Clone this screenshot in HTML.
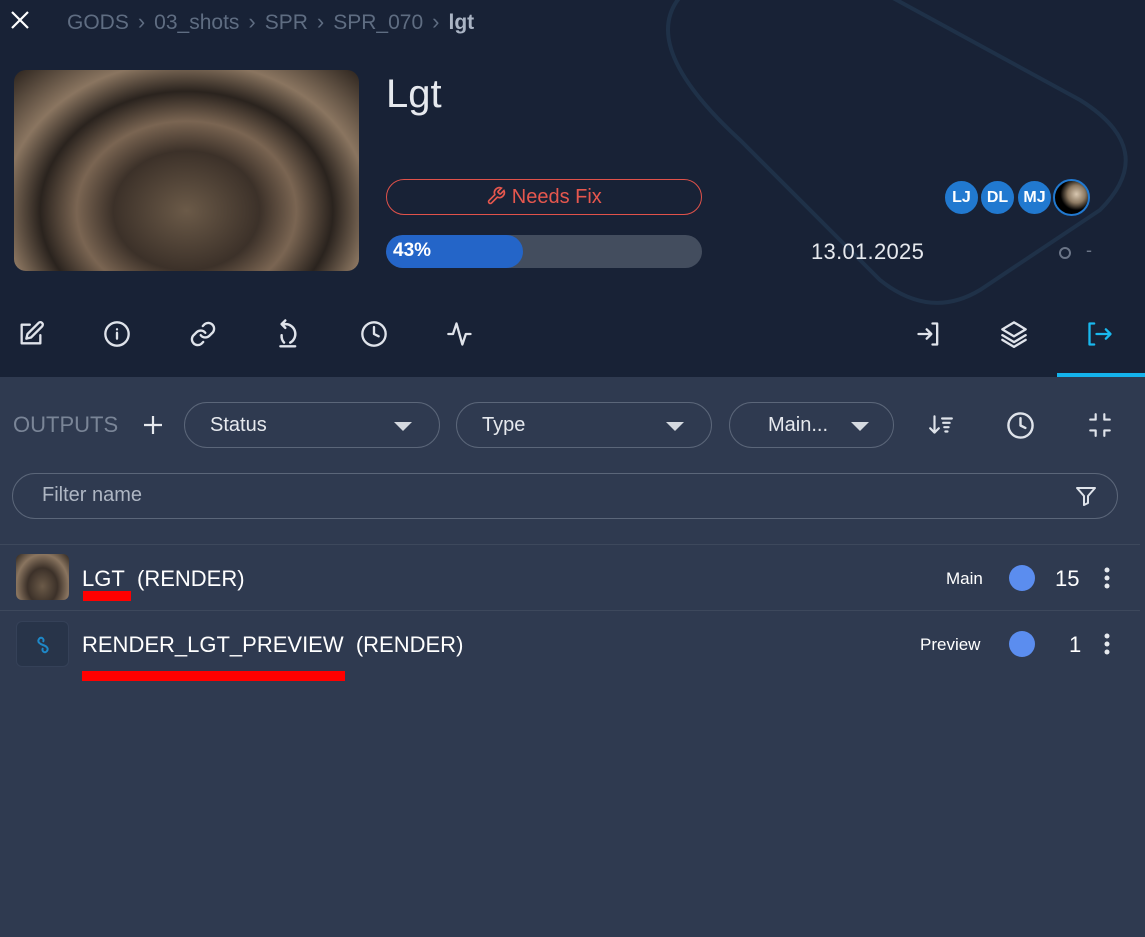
<!DOCTYPE html>
<html><head><meta charset="utf-8"><style>
*{box-sizing:border-box;margin:0;padding:0}
body{width:1145px;height:937px;background:#2f3a50;font-family:"Liberation Sans",sans-serif;color:#e6e9ee;position:relative;overflow:hidden}
.hdr{position:absolute;left:0;top:0;width:1145px;height:377px;background:#182236;overflow:hidden}
.abs{position:absolute}
.crumb{left:67px;top:9px;font-size:21px;color:#5f6d82;white-space:nowrap}
.crumb b{color:#aab4c4}
.crumb i{font-style:normal;display:inline-block;margin:0 9px;font-size:22px}
.thumb{left:14px;top:70px;width:345px;height:201px;border-radius:12px;background:radial-gradient(ellipse at 50% 70%,#6b5a48 0%,#3c3129 30%,#7a6552 45%,#2a231e 60%,#8a7560 75%,#2c241e 100%)}
.pill{border-radius:18px}
svg{display:block}
.sel{position:absolute;top:402px;height:46px;border:1px solid #5b6679;border-radius:23px;font-size:20px;padding:11px 0 0 25px;color:#e6e9ee}
.tri{position:absolute;top:19px;width:0;height:0;border-left:9px solid transparent;border-right:9px solid transparent;border-top:9px solid #d5d9e0}
.row{position:absolute;left:0;width:1140px;border-top:1px solid #3d485c}
.ico{stroke:#dfe3ea;fill:none;stroke-width:2;stroke-linecap:round;stroke-linejoin:round}
.dot{position:absolute;width:26px;height:26px;border-radius:50%;background:#5b8def}
.av{position:absolute;top:179px;width:37px;height:37px;border-radius:50%;background:#2179d0;border:2px solid #182236;color:#fff;font-weight:bold;font-size:16px;text-align:center;line-height:33px}
</style></head><body>
<div class="hdr">
  <svg class="abs" style="left:560px;top:-40px" width="585" height="380"><path d="M140 20 Q200 -30 300 20 L520 140 Q600 190 540 250 L420 330 Q370 360 320 320 L180 180 Q60 70 140 20Z" stroke="#1f3148" stroke-width="4" fill="none"/></svg>
  <svg class="abs" style="left:10px;top:10px" width="20" height="20"><path d="M2 2L18 18M18 2L2 18" stroke="#fff" stroke-width="2.2"/></svg>
  <div class="abs crumb">GODS<i>›</i>03_shots<i>›</i>SPR<i>›</i>SPR_070<i>›</i><b>lgt</b></div>
  <div class="abs thumb"></div>
  <div class="abs" style="left:386px;top:72px;font-size:40px;color:#e6e9ee">Lgt</div>
  <div class="abs pill" style="left:386px;top:179px;width:316px;height:36px;border:1.5px solid #e0524a;color:#e6574e;font-size:20px;text-align:center;line-height:35px"><svg style="display:inline-block;vertical-align:-3px" width="20" height="20" viewBox="0 0 24 24"><path d="M14.7 6.3a1 1 0 0 0 0 1.4l1.6 1.6a1 1 0 0 0 1.4 0l3.8-3.8a6 6 0 0 1-7.9 7.9l-6.9 6.9a2.1 2.1 0 0 1-3-3l6.9-6.9a6 6 0 0 1 7.9-7.9z" stroke="#e6574e" stroke-width="2" fill="none"/></svg> Needs Fix</div>
  <div class="abs pill" style="left:386px;top:235px;width:316px;height:33px;background:#434d5e;border-radius:17px;overflow:hidden"><div style="width:137px;height:33px;background:#2465c8;border-radius:17px;color:#fff;font-weight:bold;font-size:19px;padding:5px 0 0 7px">43%</div></div>
  <div class="abs" style="left:811px;top:239px;font-size:22px;letter-spacing:0.3px;color:#e6e9ee">13.01.2025</div>
  <div class="abs" style="left:1059px;top:247px;width:12px;height:12px;border:2px solid #6b7587;border-radius:50%"></div>
  <div class="abs" style="left:1086px;top:240px;color:#6b7587;font-size:18px">-</div>
  <div class="av" style="left:943px">LJ</div>
  <div class="av" style="left:979px">DL</div>
  <div class="av" style="left:1016px">MJ</div>
  <div class="av" style="left:1053px;background:radial-gradient(circle at 65% 40%,#d8c7b0 0,#8d7a63 30%,#000 55%);border-color:#2179d0"></div>
  <svg class="abs" style="left:17px;top:320px" width="28" height="28" viewBox="0 0 24 24"><path class="ico" d="M11 4H4v16h16v-7M18.5 2.5a2.1 2.1 0 0 1 3 3L12 15l-4 1 1-4z"/></svg>
  <svg class="abs" style="left:103px;top:320px" width="28" height="28" viewBox="0 0 24 24"><circle class="ico" cx="12" cy="12" r="10"/><path class="ico" d="M12 16v-5M12 8h.01"/></svg>
  <svg class="abs" style="left:189px;top:320px" width="28" height="28" viewBox="0 0 24 24"><path class="ico" d="M10 13a5 5 0 0 0 7.5.5l3-3a5 5 0 0 0-7-7l-1.7 1.7M14 11a5 5 0 0 0-7.5-.5l-3 3a5 5 0 0 0 7 7l1.7-1.7"/></svg>
  <svg class="abs" style="left:274px;top:318px" width="30" height="32" viewBox="0 0 24 26"><path class="ico" d="M9 2L6 5l3 3M6 5h3a8 8 0 0 1 4 15M6 14a8 8 0 0 0 2 6M5 23h12"/></svg>
  <svg class="abs" style="left:360px;top:320px" width="28" height="28" viewBox="0 0 24 24"><circle class="ico" cx="12" cy="12" r="10"/><path class="ico" d="M12 6v6l4 2"/></svg>
  <svg class="abs" style="left:446px;top:320px" width="28" height="28" viewBox="0 0 24 24"><path class="ico" d="M2 12h4l3-9 5 18 3-9h4"/></svg>
  <svg class="abs" style="left:915px;top:320px" width="28" height="28" viewBox="0 0 24 24"><path class="ico" d="M15 3h4v18h-4M3 12h11M10 8l4 4-4 4"/></svg>
  <svg class="abs" style="left:1000px;top:320px" width="28" height="28" viewBox="0 0 24 24"><path class="ico" d="M12 2L2 8l10 6 10-6zM2 13l10 6 10-6M2 17l10 6 10-6"/></svg>
  <svg class="abs" style="left:1086px;top:320px" width="28" height="28" viewBox="0 0 24 24"><path d="M7 3H3v18h4M9 12h12M17 8l4 4-4 4" stroke="#19b8ee" stroke-width="2" fill="none" stroke-linecap="round" stroke-linejoin="round"/></svg>
  <div class="abs" style="left:1057px;top:373px;width:88px;height:4px;background:#14b3ec"></div>
</div>
<div class="abs" style="left:13px;top:412px;font-size:22px;color:#7a8597">OUTPUTS</div>
<svg class="abs" style="left:142px;top:414px" width="22" height="22"><path d="M11 2v18M2 11h18" stroke="#e6e9ee" stroke-width="2.2"/></svg>
<div class="sel" style="left:184px;width:256px">Status<div class="tri" style="left:209px"></div></div>
<div class="sel" style="left:456px;width:256px">Type<div class="tri" style="left:209px"></div></div>
<div class="sel" style="left:729px;width:165px;padding-left:38px">Main...<div class="tri" style="left:121px"></div></div>
<svg class="abs" style="left:928px;top:412px" width="26" height="26" viewBox="0 0 24 24"><path class="ico" d="M6 4v15M2 15l4 4 4-4M13 6h9M14 10h6M15 14h4M16 18h2"/></svg>
<svg class="abs" style="left:1006px;top:411px" width="29" height="29" viewBox="0 0 24 24"><circle class="ico" cx="12" cy="12" r="10"/><path class="ico" d="M12 6v6l4 2"/></svg>
<svg class="abs" style="left:1087px;top:412px" width="26" height="26" viewBox="0 0 24 24"><path class="ico" d="M8 2v5H3M16 2v5h5M8 22v-5H3M16 22v-5h5"/></svg>
<div class="abs" style="left:12px;top:473px;width:1106px;height:46px;border:1px solid #5b6679;border-radius:23px;font-size:20px;color:#aeb6c3;padding:10px 0 0 29px">Filter name</div>
<svg class="abs" style="left:1074px;top:484px" width="24" height="24" viewBox="0 0 24 24"><path class="ico" d="M3 4h18l-7 8v7l-4 2v-9z"/></svg>
<div class="row" style="top:544px;height:67px">
  <div class="abs" style="left:16px;top:9px;width:53px;height:46px;border-radius:6px;background:radial-gradient(ellipse at 50% 70%,#6b5a48,#3c3129 40%,#8a7560 70%,#2c241e)"></div>
  <div class="abs" style="left:82px;top:21px;font-size:22px;color:#fff">LGT&nbsp; (RENDER)</div>
  <div class="abs" style="left:83px;top:46px;width:48px;height:10px;background:#ff0000"></div>
  <div class="abs" style="left:946px;top:24px;font-size:17px;color:#fff">Main</div>
  <div class="dot" style="left:1009px;top:20px"></div>
  <div class="abs" style="left:1055px;top:21px;font-size:22px;color:#fff">15</div>
</div>
<div class="row" style="top:610px;height:67px">
  <div class="abs" style="left:16px;top:10px;width:53px;height:46px;border-radius:6px;background:#283449;border:1px solid #354158"></div>
  <svg class="abs" style="left:35px;top:24px" width="16" height="20" viewBox="0 0 16 20"><path d="M8 10c-3-1-6-3-4-6s6 0 4 3M8 10c3 1 6 3 4 6s-6 0-4-3" stroke="#1e88c8" stroke-width="2" fill="none"/></svg>
  <div class="abs" style="left:82px;top:21px;font-size:22px;color:#fff">RENDER_LGT_PREVIEW&nbsp; (RENDER)</div>
  <div class="abs" style="left:82px;top:60px;width:263px;height:10px;background:#ff0000"></div>
  <div class="abs" style="left:920px;top:24px;font-size:17px;color:#fff">Preview</div>
  <div class="dot" style="left:1009px;top:20px"></div>
  <div class="abs" style="left:1069px;top:21px;font-size:22px;color:#fff">1</div>
</div>
<svg class="abs" style="left:1102px;top:566px" width="10" height="24"><circle cx="5" cy="4" r="2.5" fill="#e6e9ee"/><circle cx="5" cy="12" r="2.5" fill="#e6e9ee"/><circle cx="5" cy="20" r="2.5" fill="#e6e9ee"/></svg>
<svg class="abs" style="left:1102px;top:632px" width="10" height="24"><circle cx="5" cy="4" r="2.5" fill="#e6e9ee"/><circle cx="5" cy="12" r="2.5" fill="#e6e9ee"/><circle cx="5" cy="20" r="2.5" fill="#e6e9ee"/></svg>
</body></html>
